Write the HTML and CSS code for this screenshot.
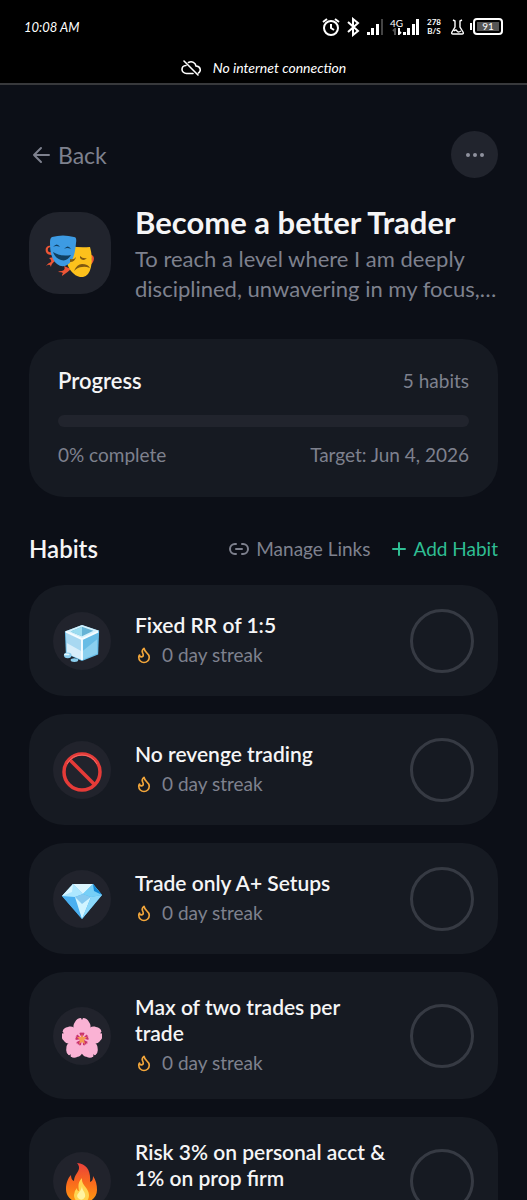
FILE: index.html
```
<!DOCTYPE html>
<html lang="en">
<head>
    <meta charset="UTF-8">
    <meta name="viewport" content="width=device-width, initial-scale=1.0">
    <title>Become a better Trader</title>
    <link rel="stylesheet" href="styles.css">
</head>
<body>
    <!-- flame used by every streak row -->
    <svg class="defs" aria-hidden="true">
        <symbol id="flame" viewBox="0 0 24 24">
            <path d="M8.500 14.500A2.500 2.500 0 0 0 11 12c0-1.380-.5-2-1-3-1.070-2.140-.22-4.050 2-6 .5 2.500 2 4.900 4 6.500 2 1.600 3 3.500 3 5.500a7 7 0 1 1-14 0c0-1.150.43-2.290 1-3a2.500 2.500 0 0 0 2.500 2.500z" fill="none" stroke="currentColor" stroke-width="2.2" stroke-linejoin="round"/>
        </symbol>
    </svg>

    <div class="system">
        <div class="status-bar">
            <span class="time">10:08 AM</span>
            <div class="status-icons">
                <svg width="18" height="20" viewBox="0 0 18 20" fill="none" stroke="#fff" stroke-width="2">
                    <circle cx="9" cy="11" r="7"/>
                    <path d="M9 7v4l3 2M1 5l4-3M17 5l-4-3"/>
                </svg>
                <svg width="14" height="20" viewBox="0 0 14 20" fill="none" stroke="#fff" stroke-width="2">
                    <path d="M2 5l10 9-5 4V2l5 4-10 9"/>
                </svg>
                <svg class="signal" width="17" height="18" viewBox="0 0 17 18" fill="#fff">
                    <rect x="0" y="14" width="3" height="3"/>
                    <rect x="4" y="10" width="3" height="7"/>
                    <rect x="9" y="6" width="3" height="11"/>
                    <rect x="14" y="1" width="2" height="16" fill="#444"/>
                </svg>
                <div class="network">
                    <span>4G</span>
                    <svg width="10" height="7" viewBox="0 0 10 7" fill="none" stroke="#fff" stroke-width="2">
                        <path d="M3 7V1L1 3" stroke="#555"/>
                        <path d="M7 0v6l2-2"/>
                    </svg>
                </div>
                <svg width="16" height="18" viewBox="0 0 16 18" fill="#fff">
                    <rect x="0" y="14" width="3" height="3"/>
                    <rect x="4" y="10" width="3" height="7"/>
                    <rect x="9" y="6" width="3" height="11"/>
                    <rect x="13" y="1" width="3" height="16"/>
                </svg>
                <div class="speed"><span>278</span><span>B/S</span></div>
                <svg width="13" height="16" viewBox="0 0 13 16" fill="none" stroke="#fff" stroke-width="1.400">
                    <path d="M2 1l2 1v6L1 13q-1 2 1 2h9q2 0 1-2L9 8V2l2-1M3 12q2-2 3 0t4 0"/>
                </svg>
                <div class="battery"><span>91</span></div>
            </div>
        </div>
        <div class="notice">
            <svg width="20" height="16" viewBox="0 0 20 16" fill="none" stroke="#fff" stroke-width="1.600" stroke-linecap="round">
                <path d="M3 1l14 14M5 5.500C2 5.500 1 7.500 1 9.500S3 13.500 5.500 13.500H12M7.500 2.500C11 .6 14.500 3 15 6c5 .3 5.200 5.300 2.500 7"/>
            </svg>
            <span>No internet connection</span>
        </div>
    </div>

    <main>
        <div class="top-row">
            <a class="back" href="#">
                <svg width="18" height="18" viewBox="0 0 18 18" fill="none" stroke="currentColor" stroke-width="2" stroke-linecap="round" stroke-linejoin="round">
                    <path d="M17 9H2M9 2L2 9l7 7"/>
                </svg>
                Back
            </a>
            <button class="more" aria-label="More options">
                <svg width="20" height="6" viewBox="0 0 20 6" fill="currentColor">
                    <circle cx="3" cy="3" r="2"/><circle cx="10" cy="3" r="2"/><circle cx="17" cy="3" r="2"/>
                </svg>
            </button>
        </div>

        <div class="goal">
            <div class="goal-icon">
                <svg width="50" height="42" viewBox="0 0 50 42">
                    <path d="M7 11C1 10 0 14 1 17q1 3 6 3M4 23q3 2 2 4-3 1-5 4 3-2 4-1l1 2q0-3 4-6l-1-4zM43 20c6-1 7 3 5 7q-2 4-4 2M19 31q2 4-2 5-3 0-4 1 4 0 5 1-1 1-1 3 6-4 9-7z" fill="#ee5636"/>
                    <path d="M6 12q-4 0-3 4 1 2 4 1zM44 22q4 0 2 4-1 2-3 1z" fill="#22242d"/>
                    <path d="M26 11q8 2 19 1 3 11 1 20-2 9-8 10-6 1-12-6-5-6-4-14z" fill="#fdc11c"/>
                    <path d="M7 2q11-3 22 0 3 0 2 6c-1 11-3 19-9 22q-5 3-10-1C6 24 5 16 5 7q0-4 2-5z" fill="#3d9be3"/>
                    <path d="M8 12q4-5 7 0-4-2-7 0zM19 14q4-5 7 0-4-2-7 0zM8 17q8 5 18 3-4 7-10 5-6-2-8-8z" fill="#103f60"/>
                    <path d="M25 24q4 1 6-2-1 5-6 5zM35 21q3 3 7 2-4 4-7 0zM29 36q3-7 8-7 6 0 8 4-5-2-8-1-4 0-8 4z" fill="#815910"/>
                </svg>
            </div>
            <div class="goal-text">
                <h1>Become a better Trader</h1>
                <p>To reach a level where I am deeply disciplined, unwavering in my focus,…</p>
            </div>
        </div>

        <section class="progress-card">
            <div class="split">
                <h2 id="progress-title">Progress</h2>
                <span>5 habits</span>
            </div>
            <progress value="0" max="100" aria-labelledby="progress-title"></progress>
            <div class="split">
                <span>0% complete</span>
                <span>Target: Jun 4, 2026</span>
            </div>
        </section>

        <div class="habits-header">
            <h2>Habits</h2>
            <div class="actions">
                <button class="manage">
                    <svg width="20" height="12" viewBox="0 0 20 12" fill="none" stroke="currentColor" stroke-width="2" stroke-linecap="round">
                        <path d="M7 1H6a5 5 0 0 0 0 10h1M13 1h1a5 5 0 0 1 0 10h-1M7 6h6"/>
                    </svg>
                    Manage Links
                </button>
                <button class="add">
                    <svg width="16" height="16" viewBox="0 0 16 16" fill="none" stroke="currentColor" stroke-width="2" stroke-linecap="round">
                        <path d="M8 2v12M2 8h12"/>
                    </svg>
                    Add Habit
                </button>
            </div>
        </div>

        <ul class="habits">
            <li class="habit">
                <div class="habit-icon">
                    <svg width="38" height="40" viewBox="0 0 40 40">
                        <path d="M2 8L20 1l18 6-1 25-17 7L3 31z" fill="#66bde8"/>
                        <path d="M3 9l17 7v22L4 31z" fill="#a8d8f1"/>
                        <path d="M4 20l16 9v9L4 31z" fill="#d8eefa"/>
                        <path d="M20 16l17-8-1 23-16 7z" fill="#67bce5"/>
                        <path d="M20 29l16-13v15l-16 7z" fill="#8bd0ef"/>
                        <path d="M2 8L20 1l18 6-18 9z" fill="#d5f1fc"/>
                        <path d="M8 8l12-5 12 4-12 6z" fill="#65b3d5"/>
                        <path d="M20 3v10L8 8z" fill="#9bdcf0"/>
                        <path d="M3 8l17 8 17-8M20 16v22" fill="none" stroke="#f5fcff" stroke-width="2"/>
                        <ellipse cx="5" cy="33" rx="4" ry="3" fill="#8ccfef"/>
                        <ellipse cx="4" cy="32" rx="3" ry="1" fill="#e5f8ff"/>
                        <ellipse cx="12" cy="38" rx="4" ry="2" fill="#8ccfef"/>
                    </svg>
                </div>
                <div class="habit-text">
                    <label for="habit-1">Fixed RR of 1:5</label>
                    <p class="streak"><svg width="18" height="18"><use href="#flame"/></svg>0 day streak</p>
                </div>
                <input type="checkbox" id="habit-1">
            </li>
            <li class="habit">
                <div class="habit-icon">
                    <svg width="40" height="40" viewBox="0 0 40 40" fill="none" stroke="#e53b38" stroke-width="3.500">
                        <circle cx="20" cy="20" r="18"/>
                        <path d="M7.500 7.500l25 25"/>
                        <path d="M5 12Q10 3 20 3t15 9" stroke="#f36b67" stroke-width="1"/>
                    </svg>
                </div>
                <div class="habit-text">
                    <label for="habit-2">No revenge trading</label>
                    <p class="streak"><svg width="18" height="18"><use href="#flame"/></svg>0 day streak</p>
                </div>
                <input type="checkbox" id="habit-2">
            </li>
            <li class="habit">
                <div class="habit-icon">
                    <svg width="40" height="36" viewBox="0 0 40 36">
                        <path d="M11 1h20l9 11-20 24L0 13z" fill="#48b5f2"/>
                        <path d="M0 13l13 1 7 22z" fill="#4aaff0"/>
                        <path d="M13 14h16l-9 22z" fill="#d1f4ff"/>
                        <path d="M29 14l11-2-20 24z" fill="#8bd8fa"/>
                        <path d="M11 1l10 10-8 3-13-1z" fill="#ade7ff"/>
                        <path d="M11 1h20L21 11z" fill="#dcf6ff"/>
                        <path d="M31 1l9 11-11 2-8-3z" fill="#76cff7"/>
                        <path d="M31 1l9 11-8-4z" fill="#1287d5"/>
                        <path d="M13 14l8-3 8 3-9 7z" fill="#86c9f0"/>
                        <path d="M0 13L11 1l-1 8z" fill="#d9f5ff"/>
                    </svg>
                </div>
                <div class="habit-text">
                    <label for="habit-3">Trade only A+ Setups</label>
                    <p class="streak"><svg width="18" height="18"><use href="#flame"/></svg>0 day streak</p>
                </div>
                <input type="checkbox" id="habit-3">
            </li>
            <li class="habit">
                <div class="habit-icon">
                    <svg width="40" height="40" viewBox="0 0 40 40">
                        <symbol id="petal" viewBox="0 0 40 40">
                            <path d="M20 21C13 15 9 9 13 4q2-4 6-4l1 2 1-2q4 0 6 4c4 5 0 11-7 17z" fill="#fab2d4"/>
                            <path d="M20 21l-3-6q1 1 1-1 1 2 2 0 1 2 2 0 0 2 1 1z" fill="#c9326d"/>
                        </symbol>
                        <use href="#petal"/>
                        <use href="#petal" transform="rotate(72 20 21)"/>
                        <use href="#petal" transform="rotate(144 20 21)"/>
                        <use href="#petal" transform="rotate(216 20 21)"/>
                        <use href="#petal" transform="rotate(288 20 21)"/>
                        <path d="M20 16l1 3 4 0-3 3 1 4-3-2-3 2 1-4-3-3 4 0z" fill="#f39a50"/>
                    </svg>
                </div>
                <div class="habit-text">
                    <label for="habit-4">Max of two trades per trade</label>
                    <p class="streak"><svg width="18" height="18"><use href="#flame"/></svg>0 day streak</p>
                </div>
                <input type="checkbox" id="habit-4">
            </li>
            <li class="habit">
                <div class="habit-icon">
                    <svg width="34" height="40" viewBox="0 0 34 40">
                        <linearGradient id="fire" x1="0" y1="0" x2="0" y2="1">
                            <stop offset="0" stop-color="#e9403c"/>
                            <stop offset=".5" stop-color="#fa6b1c"/>
                            <stop offset="1" stop-color="#ff9c10"/>
                        </linearGradient>
                        <path d="M12 0c10 1 14 8 13 19 3-1 3-4 3-6 3 4 4 9 4 14 0 8-7 13-15 13S1 35 1 26C1 20 3 15 6 12q0 5 3 6C9 10 18 7 12 0z" fill="url(#fire)"/>
                        <path d="M17 15c-1 7 7 10 7 17 0 5-3 8-7 8s-8-3-8-8q0-4 3-7 0 3 2 3c-1-5-1-9 3-13z" fill="#ffd34e"/>
                        <path d="M17 23c0 5 4 6 3 11q-3 5-7 1c-3-4 3-5 4-12z" fill="#fff3a0"/>
                    </svg>
                </div>
                <div class="habit-text">
                    <label for="habit-5">Risk 3% on personal acct &amp; 1% on prop firm</label>
                    <p class="streak"><svg width="18" height="18"><use href="#flame"/></svg>0 day streak</p>
                </div>
                <input type="checkbox" id="habit-5">
            </li>
        </ul>
    </main>
</body>
</html>
```
FILE: styles.css
```
* {
    box-sizing: border-box;
}

body {
    margin: 0;
    height: 100vh;
    display: flex;
    flex-direction: column;
    font-family: Lato, sans-serif;
    font-size: 19px;
    line-height: 28px;
    color: #f5f5f6;
    background-color: #0c0f17;
}

h1, h2, p, ul {
    margin: 0;
    padding: 0;
}

button {
    border: none;
    padding: 0;
    background: none;
    font: inherit;
    color: inherit;
    cursor: pointer;
}

svg {
    flex: none;
}

.defs {
    position: absolute;
    width: 0;
    height: 0;
}

/* Phone status area */
.system {
    flex: none;
    background-color: #000;
    border-bottom: 2px solid #38393c;
    color: #fff;
    font-size: 13px;
    font-style: italic;
}

.status-bar {
    display: flex;
    justify-content: space-between;
    align-items: center;
    height: 53px;
    padding: 0 24px;
}

.status-icons {
    display: flex;
    align-items: center;
    gap: 6px;
    font-style: normal;
}

.signal {
    margin-left: 1px;
}

.network {
    display: flex;
    flex-direction: column;
    align-items: center;
    margin-right: -6px;
    font-size: 10px;
    line-height: 10px;
}

.speed {
    display: flex;
    flex-direction: column;
    align-items: center;
    margin: 0 4px 0 2px;
    font-size: 8px;
    font-weight: bold;
    line-height: 9px;
}

.battery {
    position: relative;
    width: 30px;
    height: 17px;
    margin-left: 3px;
    padding: 2px;
    border: 2px solid #fff;
    border-radius: 4px;
    font-size: 10px;
    line-height: 9px;
    text-align: center;
}

.battery span {
    display: block;
    background-color: #555;
}

.battery::before {
    content: "";
    position: absolute;
    left: -5px;
    top: 3px;
    width: 2px;
    height: 7px;
    background-color: #fff;
}

.notice {
    display: flex;
    justify-content: center;
    align-items: center;
    gap: 12px;
    height: 30px;
    font-size: 14px;
}

/* Page */
main {
    flex: 1;
    min-height: 0;
    overflow-y: auto;
    padding: 46px 29px 29px;
    scrollbar-width: none;
}

.top-row {
    display: flex;
    justify-content: space-between;
    align-items: center;
}

.back {
    display: flex;
    align-items: center;
    gap: 8px;
    padding-left: 3px;
    font-size: 23px;
    color: #7e818e;
    text-decoration: none;
}

.more {
    display: flex;
    justify-content: center;
    align-items: center;
    width: 47px;
    height: 47px;
    border-radius: 50%;
    background-color: #21242d;
    color: #8f929d;
}

.goal {
    display: flex;
    align-items: center;
    gap: 24px;
    margin-top: 24px;
}

.goal-icon {
    display: flex;
    justify-content: center;
    align-items: center;
    flex: none;
    width: 82px;
    height: 82px;
    padding-top: 6px;
    border-radius: 30px;
    background-color: #21242d;
}

.goal-text p {
    font-size: 22px;
    line-height: 30px;
    color: #7e818e;
}

h1 {
    margin-bottom: 2px;
    font-size: 31px;
    font-weight: 700;
    line-height: 40px;
}

.progress-card {
    margin-top: 35px;
    padding: 28px 29px;
    border-radius: 35px;
    background-color: #161a22;
    color: #7e818e;
}

.split {
    display: flex;
    justify-content: space-between;
    align-items: center;
}

.progress-card h2 {
    font-size: 22px;
    font-weight: 600;
    color: #f5f5f6;
}

progress {
    display: block;
    appearance: none;
    width: 100%;
    height: 12px;
    margin: 20px 0 14px;
    border: none;
    border-radius: 6px;
    background-color: #21242d;
    overflow: hidden;
}

progress::-webkit-progress-bar {
    background-color: #21242d;
}

progress::-webkit-progress-value {
    background-color: #2fbe93;
}

.habits-header {
    display: flex;
    justify-content: space-between;
    align-items: center;
    margin-top: 38px;
}

.habits-header h2 {
    font-size: 24px;
    font-weight: 600;
}

.actions {
    display: flex;
    gap: 20px;
}

.actions button {
    display: flex;
    align-items: center;
    gap: 7px;
}

.manage {
    color: #7e818e;
}

.add {
    color: #2fbe93;
}

.habits {
    display: flex;
    flex-direction: column;
    gap: 18px;
    margin-top: 22px;
    list-style: none;
}

.habit {
    display: flex;
    align-items: center;
    gap: 24px;
    min-height: 111px;
    padding: 22px 24px;
    border-radius: 35px;
    background-color: #161a22;
}

.habit-icon {
    display: flex;
    justify-content: center;
    align-items: center;
    flex: none;
    width: 58px;
    height: 58px;
    padding-top: 4px;
    border-radius: 50%;
    background-color: #21232c;
}

.habit-text {
    flex: 1;
}

.habit-text label {
    display: block;
    font-size: 21px;
    font-weight: 600;
    line-height: 26px;
}

.streak {
    display: flex;
    align-items: center;
    gap: 9px;
    margin-top: 3px;
    color: #7e818e;
}

.streak svg {
    color: #f2a63b;
}

.habit input {
    appearance: none;
    flex: none;
    width: 64px;
    height: 64px;
    margin: 0;
    border: 3px solid #363a43;
    border-radius: 50%;
    cursor: pointer;
}

.habit input:checked {
    border-color: #2fbe93;
    background-color: #2fbe93;
}
```
